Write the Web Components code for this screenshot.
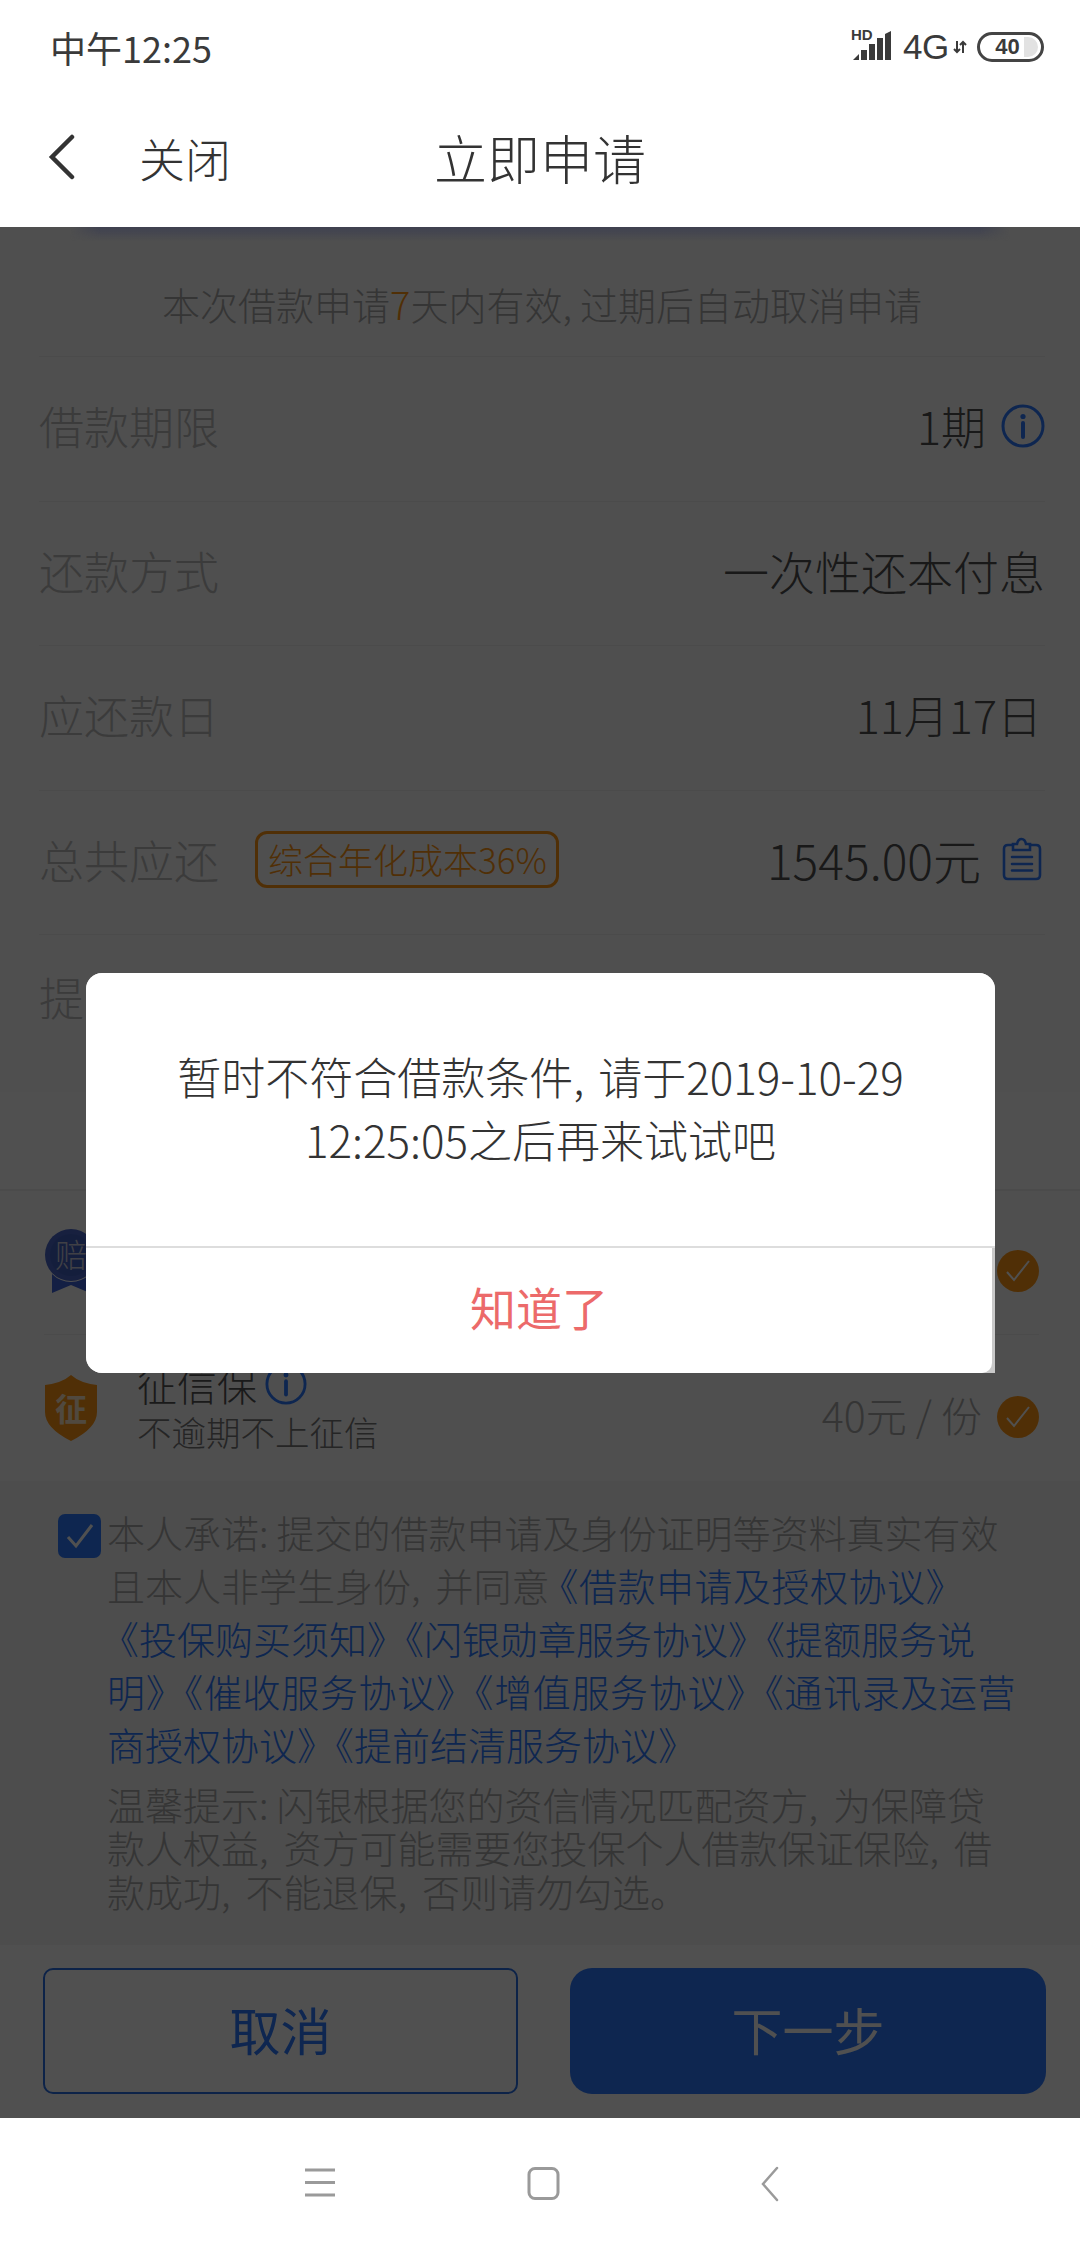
<!DOCTYPE html>
<html>
<head>
<meta charset="utf-8">
<style>
  html, body { margin: 0; padding: 0; background: #fff; }
  body { font-family: "Noto Sans CJK SC", "Noto Sans", sans-serif; font-weight: 300; color: #333; }
  app-screen { height: 2248px; }
</style>
</head>
<body>
<app-screen>
  <status-bar></status-bar>
  <nav-bar title="立即申请" back="关闭"></nav-bar>
  <main-sheet>
    <notice-line>本次借款申请<b>7</b>天内有效<i>,</i>过期后自动取消申请</notice-line>
    <info-row label="借款期限"><span style="font-size:45px">1期</span><line-icon name="info"></line-icon></info-row>
    <info-row label="还款方式"><span>一次性还本付息</span></info-row>
    <info-row label="应还款日"><span style="font-size:45px;margin-right:3px">11月17日</span></info-row>
    <info-row label="总共应还" tag="综合年化成本36%"><span style="font-size:48px;margin-right:6px">1545.00元</span><line-icon name="clip" style="margin-right:3px"></line-icon></info-row>
    <info-row label="提" last></info-row>
    <gap-band></gap-band>
    <insure-row kind="pei"></insure-row>
    <insure-row kind="zheng" name="征信保" sub="不逾期不上征信" price="40元 / 份" last></insure-row>
    <agree-block></agree-block>
    <action-bar></action-bar>
  </main-sheet>
  <alert-dialog action="知道了">暂时不符合借款条件<i>,</i>请于2019-10-29<br>12:25:05之后再来试试吧</alert-dialog>
  <soft-keys></soft-keys>
</app-screen>

<script>
const BLUE = '#2d7aff';
const ORANGE = '#ff9614';

class AppScreen extends HTMLElement {
  connectedCallback() {
    this.attachShadow({ mode: 'open' });
    this.shadowRoot.innerHTML = `
      <style>
        :host { display: flex; flex-direction: column; width: 1080px; background: #fff; overflow: hidden; }
        .dim { position: relative; height: 1891px; overflow: hidden; }
        .shade { position: absolute; inset: 0; background: rgba(0,0,0,.685); display: flex; align-items: center; justify-content: center; }
        .edge { position: absolute; left: 70px; right: 70px; top: 0; height: 14px; background: linear-gradient(#3f4150, rgba(63,65,80,0)); -webkit-mask-image: linear-gradient(90deg, transparent, #000 30px, #000 calc(100% - 30px), transparent); }
      </style>
      <slot></slot>
      <div class="dim">
        <slot name="under"></slot>
        <div class="shade"><slot name="over"></slot></div>
        <div class="edge"></div>
      </div>
      <slot name="foot"></slot>
    `;
    [...this.children].forEach(k => {
      if (k.localName === 'main-sheet') k.slot = 'under';
      else if (k.localName === 'alert-dialog') k.slot = 'over';
      else if (k.localName === 'soft-keys') k.slot = 'foot';
    });
  }
}

class StatusBar extends HTMLElement {
  connectedCallback() {
    this.attachShadow({ mode: 'open' });
    this.shadowRoot.innerHTML = `
      <style>
        :host { display: flex; align-items: center; justify-content: space-between; height: 90px; padding: 4px 36px 0 50px; box-sizing: border-box; color: #3a3a3a; }
        .time { font-size: 36px; font-weight: 400; }
        .right { display: flex; align-items: center; }
        .hd { position: relative; width: 42px; height: 32px; margin-right: 9px; }
        .hd b { position: absolute; left: -1px; top: -3px; font: bold 15px "Liberation Sans", sans-serif; line-height: 13px; }
        .hd svg { position: absolute; left: 0; top: 0; }
        .g { font: 35px "Liberation Sans", sans-serif; line-height: 32px; width: 50px; letter-spacing: -.5px; }
        .bat { width: 67px; height: 30px; box-sizing: border-box; border: 3px solid #444; border-radius: 15px; margin-left: 10px; display: flex; align-items: center; justify-content: center; font: bold 22px "Liberation Sans", sans-serif; position: relative; padding-right: 6px; }
        .bat::after { content: ''; position: absolute; right: 3px; top: 2px; bottom: 2px; width: 14px; background: #e2e2e2; border-radius: 0 10px 10px 0; z-index: 0; }
        .bat span { position: relative; z-index: 1; }
      </style>
      <div class="time">中午12:25</div>
      <div class="right">
        <div class="hd"><b>HD</b>
          <svg width="42" height="32" viewBox="0 0 42 32" fill="#3a3a3a">
            <path d="M1 29 L7 23 V29 Z"/><rect x="9" y="19" width="6" height="10"/><rect x="17" y="13" width="6" height="16"/><rect x="25" y="7" width="6" height="22"/><path d="M33 3 L39 0 V29 H33 Z"/>
          </svg>
        </div>
        <div class="g">4G</div>
        <svg width="14" height="14" viewBox="0 0 14 14" fill="none" stroke="#3a3a3a" stroke-width="2"><path d="M4 1 V12 M1 9 L4 12 L7 9 M10 13 V2 M7 5 L10 2 L13 5"/></svg>
        <div class="bat"><span>40</span></div>
      </div>
    `;
  }
}

class NavBar extends HTMLElement {
  connectedCallback() {
    this.attachShadow({ mode: 'open' });
    this.shadowRoot.innerHTML = `
      <style>
        :host { display: grid; grid-template-columns: 1fr auto 1fr; align-items: center; height: 137px; padding: 0 47px 4px 47px; box-sizing: border-box; color: #333; }
        .l { display: flex; align-items: center; gap: 64px; font-size: 46px; }
        .t { font-size: 53px; }
        svg { display: block; }
      </style>
      <div class="l">
        <svg width="28" height="46" viewBox="0 0 28 46" fill="none" stroke="#333" stroke-width="4.5" stroke-linecap="round"><path d="M25 3 L5 23 L25 43"/></svg>
        <span>${this.getAttribute('back')}</span>
      </div>
      <div class="t">${this.getAttribute('title')}</div>
      <div></div>
    `;
  }
}

class MainSheet extends HTMLElement {
  connectedCallback() {
    this.attachShadow({ mode: 'open' });
    this.shadowRoot.innerHTML = `
      <style>:host { display: flex; flex-direction: column; height: 100%; background: #fcfcfc; }</style>
      <slot></slot>
    `;
  }
}

class NoticeLine extends HTMLElement {
  connectedCallback() {
    this.attachShadow({ mode: 'open' });
    this.shadowRoot.innerHTML = `
      <style>
        :host { display: block; height: 130px; padding-top: 49px; box-sizing: border-box; margin: 0 35px 0 39px; text-align: center; font-size: 38px; line-height: 56px; color: #aaa; border-bottom: 1px solid #eee; }
        ::slotted(b) { color: ${ORANGE}; font-weight: 300; }
        ::slotted(i) { font-style: normal; font-feature-settings: "halt"; margin-right: 8px; }
      </style>
      <slot></slot>
    `;
  }
}

class InfoRow extends HTMLElement {
  connectedCallback() {
    const tag = this.getAttribute('tag');
    this.attachShadow({ mode: 'open' });
    this.shadowRoot.innerHTML = `
      <style>
        :host { display: flex; align-items: center; height: 144.5px; box-sizing: border-box; padding-bottom: 6px; margin: 0 35px 0 39px; font-size: 45px; color: #bbb; border-bottom: 1px solid #eee; }
        :host([last]) { border-bottom: 0; height: 156.5px; padding-bottom: 34px; }
        .tag { margin-left: 36px; height: 57px; box-sizing: border-box; border: 3px solid ${ORANGE}; border-radius: 12px; padding: 0 9px 0 10px; font-size: 35px; line-height: 50px; color: ${ORANGE}; }
        .val { margin-left: auto; display: flex; align-items: center; gap: 15px; color: #505050; font-size: 46px; }
      </style>
      <span>${this.getAttribute('label')}</span>
      ${tag ? `<span class="tag">${tag}</span>` : ''}
      <div class="val"><slot></slot></div>
    `;
  }
}

class LineIcon extends HTMLElement {
  connectedCallback() {
    const name = this.getAttribute('name');
    const size = this.getAttribute('size') || 44;
    const icons = {
      info: `<circle cx="22" cy="22" r="20" stroke-width="3"/><circle cx="22" cy="12.5" r="2.6" fill="${BLUE}" stroke="none"/><path d="M22 19 V33" stroke-width="4"/>`,
      clip: `<path d="M11 8 H6 Q2 8 2 12 V38 Q2 42 6 42 H34 Q38 42 38 38 V12 Q38 8 34 8 H28" stroke-width="2.6"/><path d="M11 13 V7 H15 Q16 2 19.500 2 Q23 2 24 7 H28 V13 Z" stroke-width="2.6"/><path d="M10 20 H30 M10 27 H30 M10 33.500 H30" stroke-width="2.6"/>`
    };
    const w = name === 'clip' ? 40 : size;
    this.attachShadow({ mode: 'open' });
    this.shadowRoot.innerHTML = `
      <style>:host { display: block; } svg { display: block; }</style>
      <svg width="${w}" height="${size}" viewBox="0 0 ${name === 'clip' ? '40 44' : '44 44'}" fill="none" stroke="${BLUE}" stroke-linecap="round">${icons[name]}</svg>
    `;
  }
}

class GapBand extends HTMLElement {
  connectedCallback() {
    this.attachShadow({ mode: 'open' });
    this.shadowRoot.innerHTML = `<style>:host { display: block; height: 99px; box-sizing: border-box; background: #fff; border-bottom: 2px solid #f0f0f0; }</style>`;
  }
}

class InsureRow extends HTMLElement {
  connectedCallback() {
    const kind = this.getAttribute('kind');
    const name = this.getAttribute('name');
    const badge = kind === 'pei'
      ? `<svg width="54" height="66" viewBox="0 0 54 66">
           <path d="M8 42 V64 L27 56 L46 64 V42 Z" fill="#3f62d8"/>
           <circle cx="27" cy="27" r="26" fill="#fff"/>
           <circle cx="27" cy="26" r="26" fill="#4a66c8"/>
           <circle cx="27" cy="26" r="21" fill="#4260c0"/>
           <text x="27" y="38" text-anchor="middle" font-size="32" fill="#ccd" font-family="Noto Sans CJK SC">赔</text>
         </svg>`
      : `<svg width="54" height="68" viewBox="0 0 54 68">
           <path d="M27 1 Q36 9 53 11 V38 Q53 54 27 67 Q1 54 1 38 V11 Q18 9 27 1 Z" fill="${ORANGE}"/>
           <text x="27" y="47" text-anchor="middle" font-size="32" font-weight="700" fill="#ffe9c8" font-family="Noto Sans CJK SC">征</text>
         </svg>`;
    this.attachShadow({ mode: 'open' });
    this.shadowRoot.innerHTML = `
      <style>
        :host { display: flex; align-items: center; height: 144px; margin: 0 41px 0 44px; box-sizing: border-box; border-bottom: 1px solid #eee; }
        :host([last]) { border-bottom: 0; height: 146px; }
        .b { width: 93px; flex: none; }
        svg { display: block; }
        .txt { display: flex; flex-direction: column; margin-top: -3px; }
        .n { display: flex; align-items: center; gap: 8px; font-size: 40px; line-height: 50px; color: #555; }
        .s { font-size: 34.5px; line-height: 44px; color: #777; }
        .r { margin-left: auto; margin-top: 18px; display: flex; align-items: center; gap: 15px; font-size: 41px; color: #aaa; }
        .r span { margin-top: -5px; }
        .ck { width: 42px; height: 42px; border-radius: 50%; background: ${ORANGE}; display: flex; align-items: center; justify-content: center; }
      </style>
      <div class="b">${badge}</div>
      ${name ? `<div class="txt"><div class="n">${name}<line-icon name="info" size="42"></line-icon></div><div class="s">${this.getAttribute('sub')}</div></div>` : ''}
      <div class="r">
        ${this.getAttribute('price') ? `<span>${this.getAttribute('price')}</span>` : ''}
        <div class="ck"><svg width="26" height="22" viewBox="0 0 26 22" fill="none" stroke="#fff" stroke-width="2"><path d="M2 12 L9 20 L24 1"/></svg></div>
      </div>
    `;
  }
}

class AgreeBlock extends HTMLElement {
  connectedCallback() {
    this.attachShadow({ mode: 'open' });
    this.shadowRoot.innerHTML = `
      <style>
        :host { display: flex; flex: 1; background: #f4f4f4; padding: 24px 0 0 58px; box-sizing: border-box; }
        .box { width: 43px; height: 44px; border-radius: 7px; background: ${BLUE}; flex: none; margin: 9px 6px 0 0; display: flex; align-items: center; justify-content: center; }
        svg { display: block; }
        .t { white-space: nowrap; }
        p { margin: 0; font-size: 38px; }
        .a { line-height: 53px; color: #aaa; }
        .a a { color: ${BLUE}; text-decoration: none; }
        .h { margin-top: 12px; line-height: 43.5px; color: #aaa; }
        i { font-style: normal; font-feature-settings: "halt"; margin-right: 15px; }
        i.c { margin-right: 8px; }
        .w { letter-spacing: .65px; }
        .first { margin-left: -9px; letter-spacing: .5px; }
        .left { margin-left: -6px; }
      </style>
      <div class="box"><svg width="28" height="26" viewBox="0 0 28 26" fill="none" stroke="#fff" stroke-width="3"><path d="M2 14 L10 23 L26 2"/></svg></div>
      <div class="t">
        <p class="a">本人承诺<i class="c">:</i>提交的借款申请及身份证明等资料真实有效<br>且本人非学生身份<i>,</i>并同意<a><span class="first">《借款申请及授权协议》</span><br><span class="left">《投保购买须知》《闪银勋章服务协议》《提额服务说</span><br><span class="w">明》《催收服务协议》《增值服务协议》《通讯录及运营</span><br>商授权协议》《提前结清服务协议》</a></p>
        <p class="h">温馨提示<i class="c">:</i>闪银根据您的资信情况匹配资方<i>,</i>为保障贷<br>款人权益<i>,</i>资方可能需要您投保个人借款保证保险<i>,</i>借<br>款成功<i>,</i>不能退保<i>,</i>否则请勿勾选。</p>
      </div>
    `;
  }
}

class ActionBar extends HTMLElement {
  connectedCallback() {
    this.attachShadow({ mode: 'open' });
    this.shadowRoot.innerHTML = `
      <style>
        :host { display: grid; grid-template-columns: 475px 476px; justify-content: space-between; background: #fff; height: 173px; padding: 23px 34px 24px 43px; box-sizing: border-box; }
        div { height: 126px; box-sizing: border-box; padding-bottom: 4px; display: flex; align-items: center; justify-content: center; font-size: 51px; font-weight: 400; }
        .o { border: 2px solid #2a6fe6; border-radius: 10px; color: ${BLUE}; }
        .p { background: ${BLUE}; border-radius: 22px; color: #fff; }
      </style>
      <div class="o">取消</div>
      <div class="p">下一步</div>
    `;
  }
}

class AlertDialog extends HTMLElement {
  connectedCallback() {
    this.attachShadow({ mode: 'open' });
    this.shadowRoot.innerHTML = `
      <style>
        :host { display: flex; flex-direction: column; width: 909px; height: 400px; margin-left: 1px; background: #c9c9c9; border-radius: 16px 16px 0 16px; overflow: hidden; color: #333; }
        .m { height: 275px; box-sizing: border-box; padding-top: 72px; background: #fff; text-align: center; font-size: 44px; line-height: 63px; border-bottom: 2px solid #ddd; }
        ::slotted(i) { font-style: normal; font-feature-settings: "halt"; margin-right: 14px; }
        .b { flex: 1; margin-right: 3px; padding-bottom: 8px; background: #fff; border-radius: 0 0 10px 0; display: flex; align-items: center; justify-content: center; font-size: 46px; font-weight: 400; color: #ec6a6a; }
      </style>
      <div class="m"><slot></slot></div>
      <div class="b">${this.getAttribute('action')}</div>
    `;
  }
}

class SoftKeys extends HTMLElement {
  connectedCallback() {
    this.attachShadow({ mode: 'open' });
    this.shadowRoot.innerHTML = `
      <style>
        :host { display: flex; justify-content: center; align-items: flex-start; height: 130px; padding-top: 48px; box-sizing: border-box; }
        svg { display: block; }
      </style>
      <svg width="560" height="36" viewBox="0 0 560 36" fill="none" stroke="#9a9a9a">
        <path d="M45 4 H75 M45 16.500 H75 M45 29 H75" stroke-width="3"/>
        <rect x="269" y="2.500" width="29" height="30" rx="6" stroke-width="3"/>
        <path d="M517 2 L503 18 L517 34" stroke-width="2.500" stroke-linecap="round"/>
      </svg>
    `;
  }
}

customElements.define('app-screen', AppScreen);
customElements.define('status-bar', StatusBar);
customElements.define('nav-bar', NavBar);
customElements.define('main-sheet', MainSheet);
customElements.define('notice-line', NoticeLine);
customElements.define('info-row', InfoRow);
customElements.define('line-icon', LineIcon);
customElements.define('gap-band', GapBand);
customElements.define('insure-row', InsureRow);
customElements.define('agree-block', AgreeBlock);
customElements.define('action-bar', ActionBar);
customElements.define('alert-dialog', AlertDialog);
customElements.define('soft-keys', SoftKeys);
</script>
</body>
</html>
